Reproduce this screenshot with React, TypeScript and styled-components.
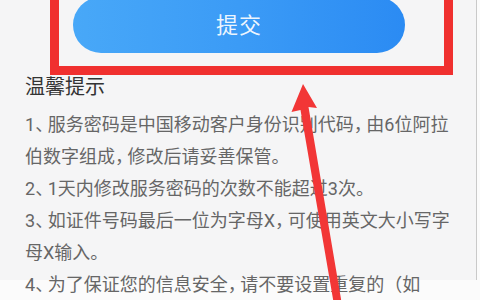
import React from "react";
import styled, { createGlobalStyle } from "styled-components";

const Global = createGlobalStyle`
  html, body { margin: 0; padding: 0; background: #ffffff; }
  * { box-sizing: border-box; }
`;

const Frame = styled.div`
  position: relative;
  width: 480px;
  height: 300px;
  overflow: hidden;
  background: #fbfbfb;
  font-family: Roboto, "Noto Sans CJK SC", sans-serif;
`;

const Screen = styled.div`
  width: 477px;
  height: 300px;
  background: #f5f5f6;
  border-right: 1px solid #c9c9c9;
`;

const Highlight = styled.div`
  margin: -20px 0 0 50px;
  width: 403px;
  border: 9px solid #f0302f;
  padding: 8px 0 13px 14px;
`;

const SubmitButton = styled.button`
  display: flex;
  align-items: center;
  justify-content: center;
  width: 332px;
  height: 56px;
  padding: 0 0 5px;
  border: none;
  border-radius: 28px;
  background: linear-gradient(90deg, #48a8f8 0%, #3b9bf6 50%, #2b8bf3 100%);
  color: rgba(255, 255, 255, 0.92);
  font-family: inherit;
  font-size: 22px;
  letter-spacing: 1px;
`;

const Tips = styled.section`
  padding-left: 25px;
`;

const TipsTitle = styled.h3`
  margin: 0;
  font-size: 20px;
  font-weight: 400;
  line-height: 24px;
  color: #333333;
`;

const TipList = styled.div`
  margin-top: 10px;
`;

const Tip = styled.p`
  margin: 0;
  font-size: 18px;
  line-height: 32px;
  color: #666666;
  white-space: nowrap;
`;

const Punct = styled.span`
  letter-spacing: -0.3em;
`;

const ArrowLayer = styled.svg`
  position: absolute;
  left: 0;
  top: 0;
  width: 480px;
  height: 300px;
  pointer-events: none;
`;

function Text({ children }: { children: string }) {
  const parts: React.ReactNode[] = [];
  let buf = "";
  Array.from(children).forEach((ch, i) => {
    if (ch === "、" || ch === "，") {
      if (buf) parts.push(buf);
      buf = "";
      parts.push(<Punct key={i}>{ch}</Punct>);
    } else {
      buf += ch;
    }
  });
  if (buf) parts.push(buf);
  return <>{parts}</>;
}

export default function App() {
  return (
    <>
      <Global />
      <Frame>
        <Screen>
          <Highlight>
            <SubmitButton type="button">提交</SubmitButton>
          </Highlight>
          <Tips>
            <TipsTitle>温馨提示</TipsTitle>
            <TipList>
              <Tip>
                <Text>1、服务密码是中国移动客户身份识别代码，由6位阿拉</Text>
                <br />
                <Text>伯数字组成，修改后请妥善保管。</Text>
              </Tip>
              <Tip>
                <Text>2、1天内修改服务密码的次数不能超过3次。</Text>
              </Tip>
              <Tip>
                <Text>3、如证件号码最后一位为字母X，可使用英文大小写字</Text>
                <br />
                <Text>母X输入。</Text>
              </Tip>
              <Tip>
                <Text>4、为了保证您的信息安全，请不要设置重复的（如</Text>
              </Tip>
            </TipList>
          </Tips>
        </Screen>
        <ArrowLayer viewBox="0 0 480 300">
          <polygon
            points="303,84 317,108 308.5,107 341.5,302 333.5,302 300.5,110 291.5,112"
            fill="#f23636"
          />
        </ArrowLayer>
      </Frame>
    </>
  );
}
